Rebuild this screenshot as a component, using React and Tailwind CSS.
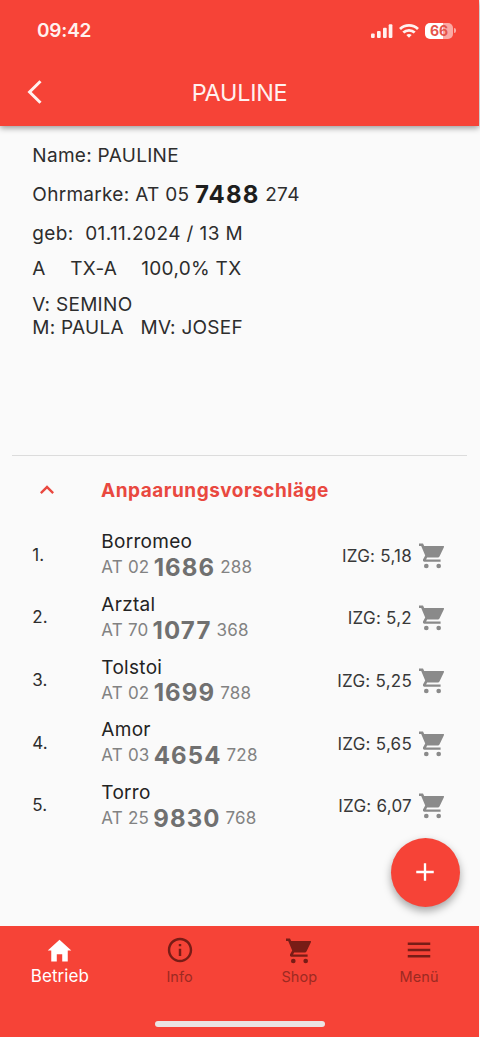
import { MdExpandLess } from 'react-icons/md';
import { IoMdAdd, IoMdHome, IoMdInformationCircleOutline, IoMdMenu } from 'react-icons/io';

const suggestions = [
  { name: 'Borromeo', prefix: 'AT 02', main: '1686', suffix: '288', izg: '5,18' },
  { name: 'Arztal', prefix: 'AT 70', main: '1077', suffix: '368', izg: '5,2' },
  { name: 'Tolstoi', prefix: 'AT 02', main: '1699', suffix: '788', izg: '5,25' },
  { name: 'Amor', prefix: 'AT 03', main: '4654', suffix: '728', izg: '5,65' },
  { name: 'Torro', prefix: 'AT 25', main: '9830', suffix: '768', izg: '6,07' },
];

function CartIcon({ className }) {
  return (
    <svg className={className} viewBox="0 0 28 28" fill="currentColor">
      <path d="M1 1.6H5L6.2 4.1H25.4Q26.4 4.2 25.9 5.2L21.6 14.3Q21 15.5 19.8 15.5H9.1L8.1 17.5H22.6V19.7H6.2Q4.4 19.5 5 17.6L7.2 13.6L3.2 3.9H1Z" />
      <circle cx="8.3" cy="24" r="2.35" />
      <circle cx="20.7" cy="24" r="2.35" />
    </svg>
  );
}

function StatusBar() {
  return (
    <div className="flex h-[61px] items-center justify-between pl-[37px] pr-[23px]">
      <span className="pt-[2px] text-[19px] font-semibold tracking-[-0.2px]">09:42</span>
      <div className="flex items-center">
        <svg className="h-[14px] w-[22px]" viewBox="0 0 22 14" fill="currentColor">
          <rect x="0" y="9.5" width="3.7" height="4.5" rx="1" />
          <rect x="6" y="7" width="3.7" height="7" rx="1" />
          <rect x="12" y="3.8" width="3.7" height="10.2" rx="1" />
          <rect x="17.7" y="0.2" width="3.7" height="13.8" rx="1" />
        </svg>
        <svg className="ml-[6px] h-[14px] w-[20px]" viewBox="0 0 20 14" fill="none" stroke="currentColor" strokeWidth="2.8">
          <path d="M1 5C6 0.2 14 0.2 19 5" />
          <path d="M4.3 8.6C7.5 5.6 12.5 5.6 15.7 8.6" />
          <path d="M7.3 10.9C9 9.6 11 9.6 12.7 10.9L10 13.8Z" fill="currentColor" stroke="none" />
        </svg>
        <div className="ml-[6px] flex h-[16px] w-[28px] items-center justify-center rounded-[5px] bg-linear-to-r from-white from-66% to-[#fba9a3] to-66% text-[14px] leading-none font-bold text-[#e5544b]">
          66
        </div>
        <div className="ml-px h-[5px] w-[2px] rounded-r-full bg-[#fba9a3]" />
      </div>
    </div>
  );
}

function Header() {
  return (
    <header className="relative mr-px h-[126px] bg-[#f64337] text-[#fff1ef] shadow-[0_2px_6px_rgba(0,0,0,0.4)]">
      <StatusBar />
      <div className="flex h-[62px] items-center">
        <svg className="ml-[27px] h-[24px] w-[15px]" viewBox="0 0 15 24" fill="none" stroke="currentColor" strokeWidth="3">
          <path d="M13.5 1.2L2.6 12L13.5 22.8" />
        </svg>
        <h1 className="ml-[-42px] flex-1 pt-px text-center text-[23.4px] tracking-[-0.25px]">PAULINE</h1>
      </div>
    </header>
  );
}

function AnimalInfo() {
  return (
    <section className="h-[329px] pt-[10px] pl-[32.3px] text-[19px] tracking-[0.3px] whitespace-pre text-[#2d2d2d]">
      <p className="h-[39px] leading-[39px]">Name: PAULINE</p>
      <div className="flex h-[39px] items-center">
        <span className="pt-px">Ohrmarke: AT 05 </span>
        <b className="text-[24px] font-bold tracking-[1.1px] text-[#1e1e1e]">7488</b>
        <span className="pt-px tracking-[0.4px]"> 274</span>
      </div>
      <p className="h-[38.5px] leading-[40px] tracking-[0.4px]">geb:  01.11.2024 / 13 M</p>
      <div className="flex h-[33px] items-center">
        <span className="w-[38px]">A</span>
        <span className="w-[71px]">TX-A</span>
        <span>100,0% TX</span>
      </div>
      <p className="mt-[7.5px] h-[23px] leading-[23px]">V: SEMINO</p>
      <p className="h-[23px] leading-[24px] tracking-[0.25px]">M: PAULA   MV: JOSEF</p>
    </section>
  );
}

function SuggestionRow({ index, item }) {
  return (
    <li className="flex h-[62.67px] items-center">
      <span className="w-[69px] pt-[2px] text-[17px] text-[#2d2d2d]">{index}.</span>
      <div className="flex-1 pt-px">
        <p className="h-[26.5px] text-[19px] leading-[27px] tracking-[0.3px] text-[#232323]">{item.name}</p>
        <div className="flex h-[26.5px] items-center text-[17px] tracking-[0.2px] whitespace-pre text-[#828282]">
          <span>{item.prefix} </span>
          <b className="-ml-[0.8px] text-[24px] font-bold tracking-[1.1px] text-[#707070]">{item.main}</b>
          <span> {item.suffix}</span>
        </div>
      </div>
      <div className="flex items-center pt-[3px]">
        <span className="pt-px text-[17px] tracking-[0.25px] text-[#383838]">IZG: {item.izg}</span>
        <CartIcon className="ml-[6px] size-[28px] text-[#8a8a8a]" />
      </div>
    </li>
  );
}

function NavItem({ icon: Icon, iconClass, label, active }) {
  return (
    <a className={`flex flex-1 flex-col items-center ${active ? 'text-white' : 'text-[#781c16]'}`}>
      <div className="mt-[9px] flex size-[30px] items-center justify-center">
        <Icon className={iconClass} />
      </div>
      {active ? (
        <span className="text-[17px] leading-[23px] tracking-[0.1px]">{label}</span>
      ) : (
        <span className="text-[14.5px] leading-[24px] tracking-[0.1px] text-[#9c2a22]">{label}</span>
      )}
    </a>
  );
}

export default function App() {
  return (
    <div className="flex h-[1037px] w-[480px] flex-col overflow-hidden bg-[#fafafa] font-['Inter',sans-serif]">
      <Header />
      <AnimalInfo />
      <hr className="mr-[13px] ml-[12px] border-t border-[#dcdcdc]" />

      <section className="relative flex-1">
        <div className="flex h-[67px] items-center pt-[2px] pl-[32.5px] text-[#e9483f]">
          <MdExpandLess className="mb-px size-[28px]" />
          <h2 className="ml-[40.5px] pt-px text-[19px] font-bold tracking-[0.5px]">Anpaarungsvorschläge</h2>
        </div>
        <ul className="pr-[34px] pl-[32.3px]">
          {suggestions.map((item, i) => (
            <SuggestionRow key={item.name} index={i + 1} item={item} />
          ))}
        </ul>
        <button
          type="button"
          className="absolute right-[20.5px] bottom-[19.5px] flex size-[69px] items-center justify-center rounded-full bg-[#f64337] text-white shadow-[0_4px_9px_rgba(0,0,0,0.35)]"
        >
          <IoMdAdd className="size-[28px]" />
        </button>
      </section>

      <footer className="mr-px flex h-[111px] flex-col items-center bg-[#f64337]">
        <nav className="flex h-[95px] w-full">
          <NavItem icon={IoMdHome} iconClass="size-[29px]" label="Betrieb" active />
          <NavItem icon={IoMdInformationCircleOutline} iconClass="size-[30px]" label="Info" />
          <NavItem icon={CartIcon} iconClass="mt-px size-[28px]" label="Shop" />
          <NavItem icon={IoMdMenu} iconClass="size-[30px]" label="Menü" />
        </nav>
        <div className="ml-px h-[6px] w-[170px] rounded-full bg-[#ebe4e2]" />
      </footer>
    </div>
  );
}
